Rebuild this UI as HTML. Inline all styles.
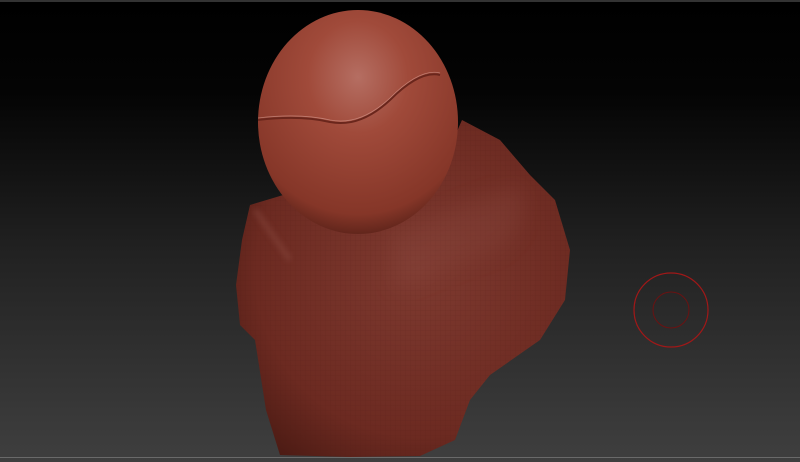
<!DOCTYPE html>
<html><head><meta charset="utf-8"><style>
html,body{margin:0;padding:0;width:800px;height:462px;overflow:hidden;background:#000}
</style></head><body>
<svg width="800" height="462" viewBox="0 0 800 462" xmlns="http://www.w3.org/2000/svg">
<defs>
<linearGradient id="bg" x1="0" y1="0" x2="0" y2="1">
<stop offset="0" stop-color="#000"/><stop offset="0.2" stop-color="#040404"/>
<stop offset="0.55" stop-color="#222"/><stop offset="1" stop-color="#3f3f3f"/></linearGradient>
<radialGradient id="sph" cx="0.5" cy="0.3" r="0.72">
<stop offset="0" stop-color="#b56e62"/><stop offset="0.35" stop-color="#a04a3a"/>
<stop offset="0.85" stop-color="#853628"/><stop offset="1" stop-color="#5a2219"/></radialGradient>
<radialGradient id="body" cx="0.55" cy="0.45" r="0.7">
<stop offset="0" stop-color="#7e3a30"/><stop offset="0.7" stop-color="#6c2a21"/>
<stop offset="1" stop-color="#4a1a13"/></radialGradient>
<pattern id="mesh" width="5" height="5" patternUnits="userSpaceOnUse">
<path d="M0 0H5M0 0V5" stroke="#4a1a12" stroke-width="0.5" opacity="0.3"/></pattern>
<filter id="bl"><feGaussianBlur stdDeviation="10"/></filter>
<filter id="bl2"><feGaussianBlur stdDeviation="3"/></filter>
</defs>
<rect width="800" height="462" fill="url(#bg)"/>
<rect width="800" height="2" fill="#333"/>
<rect y="457" width="800" height="1" fill="#6a6a6a"/>
<path d="M250 205 L300 190 L350 225 L400 200 L440 170 L462 120 L500 140 L530 175 L555 200 L570 250 L565 300 L540 340 L490 375 L470 400 L455 440 L420 456 L350 457 L280 455 L266 410 L255 340 L240 325 L236 285 L242 240 Z" fill="url(#body)"/>
<path d="M250 205 L300 190 L350 225 L400 200 L440 170 L462 120 L500 140 L530 175 L555 200 L570 250 L565 300 L540 340 L490 375 L470 400 L455 440 L420 456 L350 457 L280 455 L266 410 L255 340 L240 325 L236 285 L242 240 Z" fill="url(#mesh)"/>
<path d="M390 235 Q460 205 520 185 Q535 220 500 250 Q440 270 395 290 Z" fill="#8a4a40" opacity="0.3" filter="url(#bl)"/>
<path d="M255 210 L290 260" stroke="#9a5a50" stroke-width="5" opacity="0.35" filter="url(#bl2)"/>
<ellipse cx="358" cy="122" rx="100" ry="112" fill="url(#sph)"/>
<path d="M258 120 Q300 115 330 122 Q360 128 390 100 Q420 70 440 75" stroke="#6a261c" stroke-width="2" fill="none"/>
<path d="M258 118 Q300 113 330 120 Q360 126 390 98 Q420 68 440 73" stroke="#d9a096" stroke-width="0.8" fill="none" opacity="0.6"/>
<circle cx="671" cy="310" r="37" fill="none" stroke="#a01818" stroke-width="1.2"/>
<circle cx="671" cy="310" r="18" fill="none" stroke="#6a1212" stroke-width="1"/>
</svg>
</body></html>
